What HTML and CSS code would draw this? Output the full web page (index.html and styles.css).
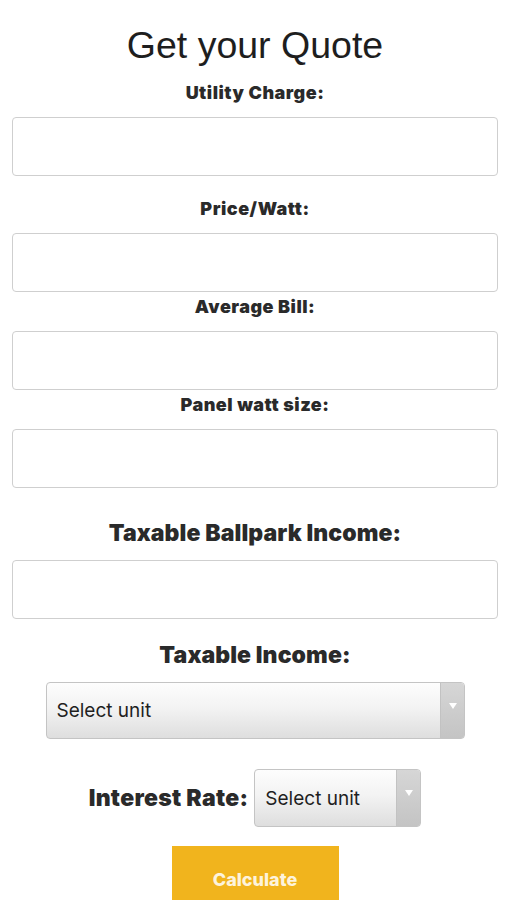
FILE: index.html
```html
<!DOCTYPE html>
<html lang="en">
<head>
<meta charset="utf-8">
<title>Get your Quote</title>
<link rel="stylesheet" href="styles.css">
</head>
<body>
<form class="quote">
  <h1 class="title">Get your Quote</h1>

  <label class="lbl lbl-first" for="utility">Utility Charge:</label>
  <input class="field" id="utility" type="text">

  <label class="lbl lbl-gap" for="price">Price/Watt:</label>
  <input class="field" id="price" type="text">

  <label class="lbl" for="bill">Average Bill:</label>
  <input class="field" id="bill" type="text">

  <label class="lbl" for="panel">Panel watt size:</label>
  <input class="field" id="panel" type="text">

  <label class="lbl lbl-big lbl-biggap" for="ballpark">Taxable Ballpark Income:</label>
  <input class="field" id="ballpark" type="text">

  <label class="lbl lbl-big lbl-gap" for="income">Taxable Income:</label>
  <div class="select select-wide">
    <select id="income"><option>Select unit</option></select>
    <span class="arrow"></span>
  </div>

  <div class="rate-row">
    <label class="lbl lbl-big lbl-inline" for="rate">Interest Rate:</label>
    <div class="select select-small">
      <select id="rate"><option>Select unit</option></select>
      <span class="arrow"></span>
    </div>
  </div>

  <button type="button" class="calc">Calculate</button>
</form>
</body>
</html>
```

FILE: styles.css
```css
* { box-sizing: border-box; }

html, body {
  margin: 0;
  padding: 0;
  background: #ffffff;
}

body {
  font-family: Inter, "Noto Sans", Arial, sans-serif;
  color: #252525;
}

.quote {
  display: flex;
  flex-direction: column;
  align-items: center;
  padding: 23px 9px 0 12px;
}

.title {
  margin: 0;
  font-family: "Liberation Sans", Arial, sans-serif;
  font-weight: 400;
  font-size: 37.5px;
  line-height: 44px;
  color: #1e1e1e;
}

.lbl {
  display: block;
  margin: 4px 0 13px;
  font-size: 18px;
  line-height: 22px;
  font-weight: 900;
  letter-spacing: 0.5px;
  color: #2a2a2a;
  text-align: center;
}

.lbl-first { margin-top: 15px; }
.lbl-gap { margin-top: 22px; }

.lbl-big {
  font-size: 23px;
  line-height: 28px;
  letter-spacing: 0.1px;
}
.lbl-biggap { margin-top: 31px; }

.field {
  display: block;
  width: 100%;
  height: 59px;
  margin: 0;
  border: 1.5px solid #cfcfcf;
  border-radius: 4px;
  background: #fff;
  font: inherit;
}

.select {
  display: flex;
  height: 57px;
  border: 1px solid #c4c4c4;
  border-radius: 4px;
  overflow: hidden;
  background: linear-gradient(#fdfdfd 0%, #f3f3f3 45%, #dedede 100%);
}

.select select {
  flex: 1;
  min-width: 0;
  appearance: none;
  -webkit-appearance: none;
  border: 0;
  background: transparent;
  padding: 0 0 0 10px;
  font-family: Inter, "Noto Sans", Arial, sans-serif;
  font-size: 19px;
  color: #1f1f1f;
}

.arrow {
  position: relative;
  width: 24px;
  flex: none;
  background: linear-gradient(#d6d6d6, #c4c4c4);
  border-left: 1px solid #c2c2c2;
}
.arrow::after {
  content: "";
  position: absolute;
  left: 8px;
  top: 20px;
  border-left: 4px solid transparent;
  border-right: 4px solid transparent;
  border-top: 6px solid #ffffff;
}

.select-wide { width: 419px; }

.rate-row {
  display: flex;
  align-items: center;
  gap: 6px;
  margin-top: 30px;
}
.lbl-inline { margin: 0; letter-spacing: 0.3px; }
.select-small { width: 167px; height: 58px; }

.calc {
  margin-top: 19px;
  width: 167px;
  height: 66px;
  border: 0;
  border-radius: 0;
  background: #f1b41d;
  color: #fdf3dc;
  font-family: Inter, "Noto Sans", Arial, sans-serif;
  font-size: 18px;
  font-weight: 800;
  padding: 0;
}
```
